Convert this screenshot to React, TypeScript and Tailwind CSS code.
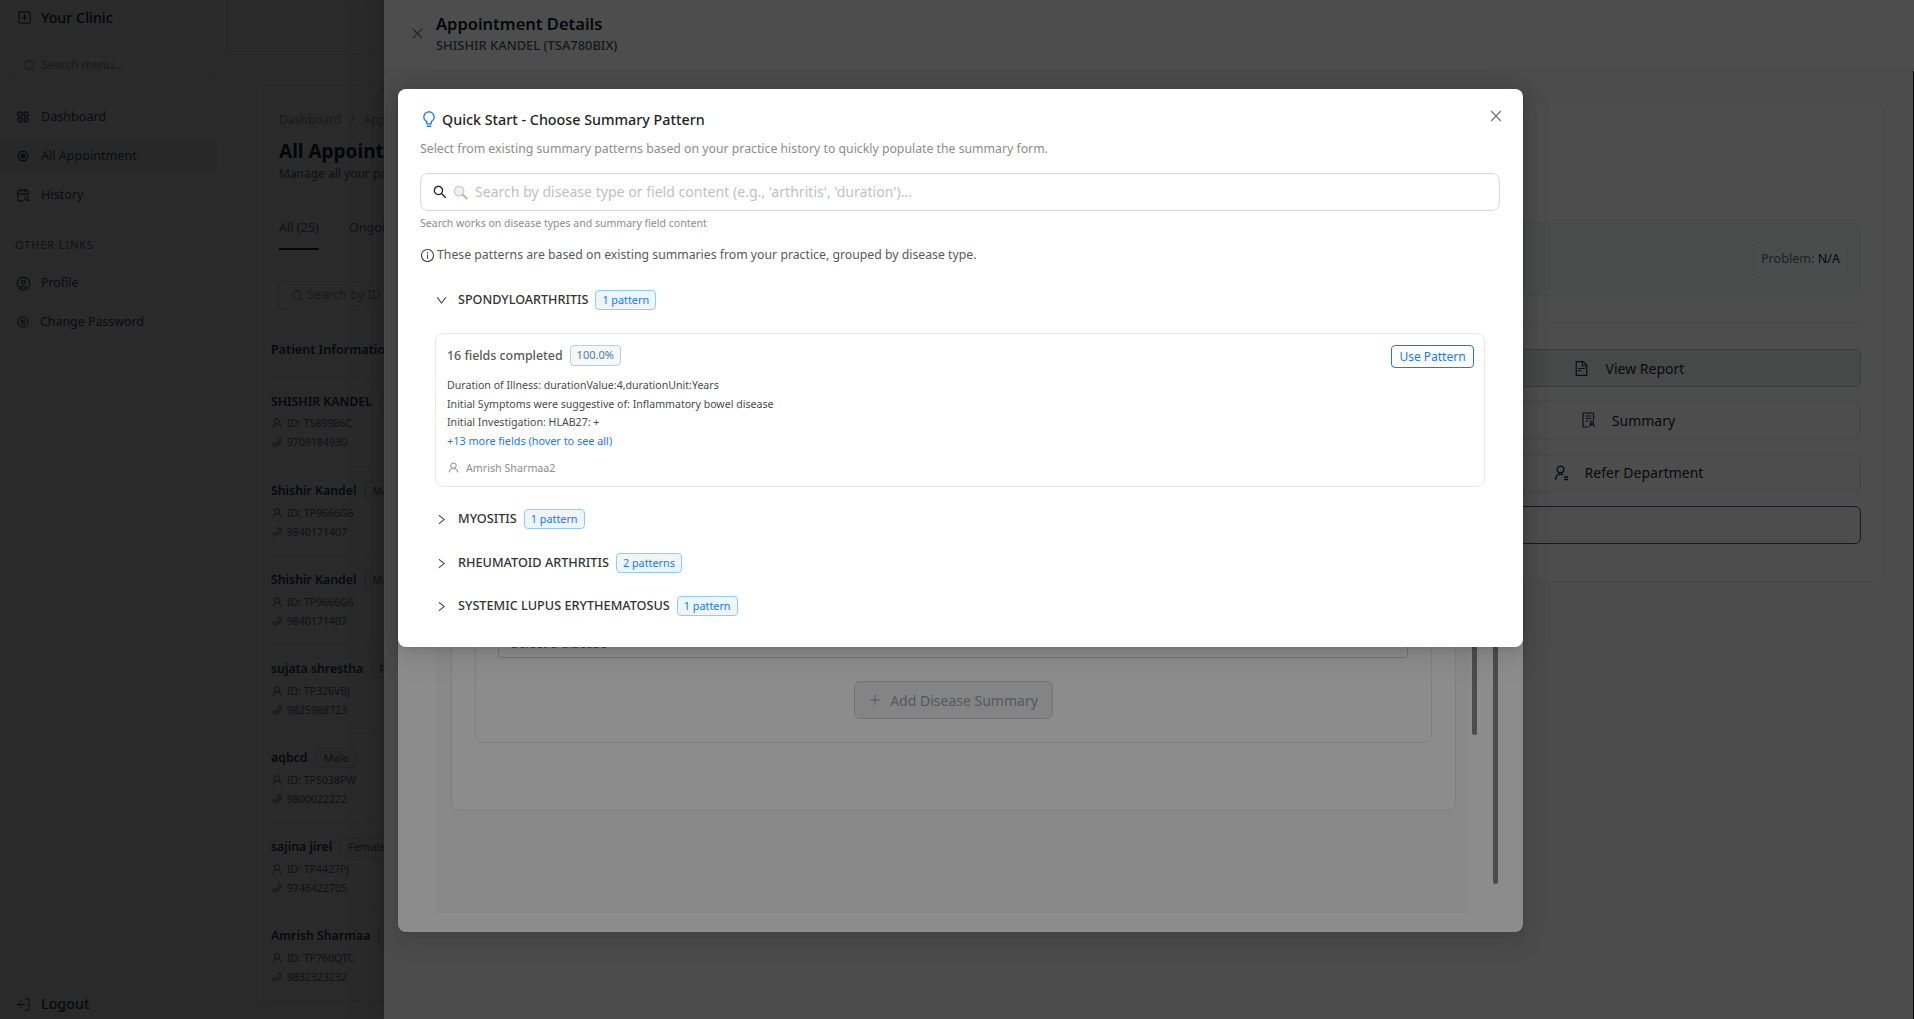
import { useState } from "react";
import { CalendarSearch, CircleUser, LogOut, Search, SquarePlus } from "lucide-react";
import {
  AiOutlineBulb,
  AiOutlineClose,
  AiOutlineDown,
  AiOutlineFileText,
  AiOutlineInfoCircle,
  AiOutlinePhone,
  AiOutlinePlus,
  AiOutlineRight,
  AiOutlineSearch,
  AiOutlineUser,
} from "react-icons/ai";

const patients = [
  { name: "SHISHIR KANDEL", gender: "Male", id: "TS89986C", phone: "9709184930" },
  { name: "Shishir Kandel", gender: "Male", id: "TP9666G6", phone: "9840171407" },
  { name: "Shishir Kandel", gender: "Male", id: "TP9666G6", phone: "9840171407" },
  { name: "sujata shrestha", gender: "Female", id: "TP326VBJ", phone: "9825988723" },
  { name: "aqbcd", gender: "Male", id: "TP5038PW", phone: "9800022222" },
  { name: "sajina jirel", gender: "Female", id: "TP4427PJ", phone: "9746422705" },
  { name: "Amrish Sharmaa", gender: "Male", id: "TP760QTC", phone: "9832323232" },
];

const groups = [
  { name: "MYOSITIS", count: "1 pattern", mt: "mt-[22px]" },
  { name: "RHEUMATOID ARTHRITIS", count: "2 patterns", mt: "mt-[24px]" },
  { name: "SYSTEMIC LUPUS ERYTHEMATOSUS", count: "1 pattern", mt: "mt-[23px]" },
];

function DashboardIcon() {
  return (
    <svg className="h-[14px] w-[14px]" viewBox="0 0 14 14" fill="none" stroke="currentColor" strokeWidth="1.4">
      <rect x="2" y="2" width="4" height="4" rx="1.2" />
      <rect x="8" y="2" width="4" height="4" rx="1.2" />
      <circle cx="4" cy="10" r="2" />
      <circle cx="10" cy="10" r="2" />
    </svg>
  );
}

function AppointmentIcon() {
  return (
    <svg className="h-[14px] w-[14px]" viewBox="0 0 14 14" fill="none" stroke="currentColor" strokeWidth="1.4">
      <circle cx="7" cy="7" r="4.8" />
      <circle cx="7" cy="7" r="2.8" fill="currentColor" stroke="none" />
    </svg>
  );
}

function PasswordIcon() {
  return (
    <svg className="h-[14px] w-[14px]" viewBox="0 0 14 14" fill="none" stroke="currentColor" strokeWidth="1.1">
      <circle cx="7" cy="7" r="5" />
      <path d="M9 5.4H6a.9.9 0 000 1.8h2a.9.9 0 010 1.8H5" />
    </svg>
  );
}

function SummaryIcon() {
  return (
    <svg className="h-[16px] w-[14px]" viewBox="0 0 14 16" fill="none" stroke="currentColor" strokeWidth="1.2">
      <path d="M6 15H2a1 1 0 01-1-1V2a1 1 0 011-1h8.5a1 1 0 011 1v6" />
      <path d="M3.5 4h6M3.5 6.5h6M3.5 9h3" />
      <circle cx="10" cy="10.6" r="1.6" />
      <path d="M7.5 15c.2-1.6 1.2-2.6 2.5-2.6s2.3 1 2.5 2.6" />
    </svg>
  );
}

function ReferIcon() {
  return (
    <svg className="h-[16px] w-[15px]" viewBox="0 0 15 16" fill="none" stroke="currentColor" strokeWidth="1.3">
      <circle cx="6.5" cy="4.5" r="3.3" />
      <path d="M1.5 15c.2-3.6 2.2-6 5-6 1 0 1.9.3 2.6.8" />
      <path d="M10 12h4M10 14.5h4" />
    </svg>
  );
}

function Sidebar() {
  const menu = [
    { label: "Dashboard", icon: <DashboardIcon /> },
    { label: "All Appointment", icon: <AppointmentIcon />, active: true },
    { label: "History", icon: <CalendarSearch className="h-[14px] w-[14px]" strokeWidth={2} /> },
  ];
  const links = [
    { label: "Profile", icon: <CircleUser className="h-[15px] w-[15px]" strokeWidth={2} /> },
    { label: "Change Password", icon: <PasswordIcon /> },
  ];
  return (
    <aside className="flex h-full w-[226px] shrink-0 flex-col bg-white text-[#4b5563]">
      <div className="flex h-[35px] items-center gap-[9px] pl-[17px] text-[#1f2937]">
        <SquarePlus className="h-[15px] w-[15px]" strokeWidth={1.6} />
        <span className="text-[14.3px] font-medium">Your Clinic</span>
      </div>
      <div className="mx-[11px] mt-[15px] flex h-[30px] w-[202px] items-center gap-[5px] rounded-md border border-[#e5e7eb] pl-[11px] text-[11.8px] text-[#9ca3af]">
        <Search className="h-[13px] w-[13px]" />
        Search menu...
      </div>
      <nav className="mt-[20px] flex flex-col gap-[5px]">
        {menu.map((item) => (
          <div
            key={item.label}
            className={`flex h-[34px] w-[217px] items-center gap-[11px] pl-[16px] text-[12.6px] ${item.active ? "bg-[#f4f5f6]" : ""}`}
          >
            {item.icon}
            <span>{item.label}</span>
          </div>
        ))}
      </nav>
      <p className="mt-[25px] pl-[15px] text-[11px] leading-4 tracking-[0.08em] text-[#6b7280]">OTHER LINKS</p>
      <nav className="mt-[13px] flex flex-col gap-[5px]">
        {links.map((item) => (
          <div key={item.label} className="flex h-[34px] w-[217px] items-center gap-[10px] pl-[16px] text-[12.4px]">
            {item.icon}
            <span>{item.label}</span>
          </div>
        ))}
      </nav>
      <div className="mb-[1px] mt-auto flex h-[28px] items-center gap-[10px] pl-[16px] text-[14.3px] font-medium text-[#374151]">
        <LogOut className="h-[15px] w-[15px] -scale-x-100" strokeWidth={1.5} />
        Logout
      </div>
    </aside>
  );
}

function PatientList() {
  return (
    <div className="-ml-[8px] mt-[31px] w-[500px]">
      <div className="border-b border-[#eef0f2] pb-[18px] text-[12.6px] font-semibold leading-[18px] text-[#374151]">
        Patient Information
      </div>
      {patients.map((p, i) => (
        <div key={i} className="h-[89px] border-b border-[#f0f1f3] pt-[14.4px]">
          <div className="flex h-[20px] items-center gap-[8px]">
            <span className="text-[12.3px] font-semibold text-[#374151]">{p.name}</span>
            <span className="flex h-[20px] items-center rounded border border-[#dfe2e6] bg-[#fafafa] px-[7px] text-[11px] text-[#6b7280]">
              {p.gender}
            </span>
          </div>
          <div className={`${i === 0 ? "mt-[2px]" : "mt-[3px]"} flex h-[18px] items-center gap-[4px] text-[10.5px] text-[#6b7280]`}>
            <AiOutlineUser className="h-[12px] w-[12px]" />
            ID: {p.id}
          </div>
          <div className="mt-[1px] flex h-[18px] items-center gap-[4px] text-[10.5px] text-[#6b7280]">
            <AiOutlinePhone className="h-[12px] w-[12px]" />
            {p.phone}
          </div>
        </div>
      ))}
    </div>
  );
}

function MainPage() {
  return (
    <main className="min-w-0 flex-1 overflow-hidden bg-white">
      <div className="h-[55px] border-b border-l border-[#e5e7eb]" />
      <div className="ml-[30px] mt-[30px] w-[800px] border border-[#f3f4f6] pl-[22px] pt-[25px]">
        <p className="text-[12px] leading-[18px] text-[#9ca3af]">
          Dashboard<span className="mx-[9px]">/</span>Appointments
        </p>
        <h1 className="mt-[8px] text-[19px] font-bold leading-[28px] text-[#1f2937]">All Appointments</h1>
        <p className="text-[12px] leading-[18px] text-[#6b7280]">Manage all your patient appointments</p>
        <div className="mt-[35px] flex gap-[30px] text-[12.6px] text-[#6b7280]">
          <span className="border-b-2 border-[#1f2937] pb-[10px] leading-[20px]">All (25)</span>
          <span className="leading-[20px]">Ongoing</span>
        </div>
        <div className="mt-[31px] flex h-[29px] w-[300px] items-center gap-[3px] rounded border border-[#e5e7eb] pl-[11px] text-[12.6px] text-[#9ca3af]">
          <Search className="h-[13px] w-[13px]" />
          Search by ID
        </div>
        <PatientList />
      </div>
    </main>
  );
}

function ActionButton({ icon, label, shaded }: { icon: React.ReactNode; label: string; shaded?: boolean }) {
  return (
    <div
      className={`flex h-[38px] items-center justify-center gap-[16px] rounded-md border text-[14px] text-[#1f2937] ${shaded ? "border-[#c9cbcd] bg-[#eceeee]" : "border-[#e5e7eb]"}`}
    >
      {icon}
      {label}
    </div>
  );
}

function AppointmentDrawer() {
  return (
    <div className="absolute inset-y-0 left-[384px] right-0 flex flex-col bg-white shadow-[-6px_0_16px_0_rgba(0,0,0,0.08),-3px_0_6px_-4px_rgba(0,0,0,0.12),-9px_0_28px_8px_rgba(0,0,0,0.05)]">
      <div className="flex h-[71px] shrink-0 items-center border-b border-[#f0f0f0] pl-[26px]">
        <AiOutlineClose className="-mt-[4px] h-[15px] w-[15px] text-[#737373]" />
        <div className="-mt-[3px] ml-[11px]">
          <h2 className="text-[16.5px] font-semibold leading-[24px] text-[#111827]">Appointment Details</h2>
          <p className="text-[12.9px] font-medium leading-[19px] text-[#4b5563]">SHISHIR KANDEL (TSA780BIX)</p>
        </div>
      </div>
      <div className="relative flex-1 bg-[#fbfcfd] pr-[31px] pt-[30px]">
        <div className="ml-[32px] h-[481px] rounded-lg border border-[#f0f0f0] bg-white pl-[979px] pr-[21px] pt-[121px]">
          <div className="flex h-[73px] items-center justify-end rounded-lg border border-[#eceff1] bg-[#fafbfc] pr-[12px]">
            <span className="flex h-[36px] items-center rounded-md border border-[#f0f0f0] px-[7px] text-[12.6px] text-[#6b7280]">
              Problem:&nbsp;<span className="text-[#111827]">N/A</span>
            </span>
          </div>
          <div className="mt-[27px] border-t border-[#f0f0f0] pt-[25px]" />
          <div className="flex flex-col gap-[14.4px]">
            <ActionButton shaded icon={<AiOutlineFileText className="h-[17px] w-[17px]" />} label="View Report" />
            <ActionButton icon={<SummaryIcon />} label="Summary" />
            <ActionButton icon={<ReferIcon />} label="Refer Department" />
            <div className="h-[38px] rounded-md border border-[#4b5563]" />
          </div>
        </div>
        <div className="absolute bottom-0 right-0 top-0 w-px bg-[#111]" />
      </div>
    </div>
  );
}

function SummaryModal() {
  return (
    <div className="absolute left-[398px] top-[89px] flex h-[843px] w-[1125px] flex-col justify-end rounded-lg bg-white pb-[19px] pl-[38px] pr-[52px] shadow-[0_6px_16px_0_rgba(0,0,0,0.08),0_3px_6px_-4px_rgba(0,0,0,0.12),0_9px_28px_8px_rgba(0,0,0,0.05)]">
      <div className="bg-[#f9f9f9] px-[15px] pb-[102px]">
        <div className="rounded-lg border border-[#e5e7eb] bg-white px-[23px] pb-[67px]">
          <div className="rounded-lg border border-[#e5e7eb] pb-[23px] pl-[22px] pr-[23px]">
            <div className="flex h-[36px] items-center rounded border border-[#d1d5db] pl-[12px] pt-[8px] text-[13px] text-[#6b7280]">
              Select a disease
            </div>
            <div className="mt-[23px] flex justify-center">
              <div className="flex h-[38px] w-[199px] items-center justify-center gap-[8px] rounded-md border border-[#d1d5db] bg-[#f0f0f0] text-[14px] text-[#9ca3af]">
                <AiOutlinePlus className="h-[14px] w-[14px]" />
                Add Disease Summary
              </div>
            </div>
          </div>
        </div>
      </div>
      <div className="absolute right-[46px] top-[40px] h-[606px] w-[5px] rounded-full bg-[#8a8a8a]" />
      <div className="absolute right-[25px] top-[40px] h-[755px] w-[5px] rounded-full bg-[#8a8a8a]" />
    </div>
  );
}

function PatternTag({ text }: { text: string }) {
  return (
    <span className="flex h-[20px] items-center rounded border border-[#91caff] bg-[#eef6fc] px-[6px] text-[10.8px] text-[#1677ff]">
      {text}
    </span>
  );
}

function QuickStartModal() {
  const [query, setQuery] = useState("");
  return (
    <div className="absolute left-[398px] top-[89px] h-[558px] w-[1125px] rounded-lg bg-white pl-[22px] pr-[23px] pt-[19px] shadow-[0_6px_16px_0_rgba(0,0,0,0.08),0_3px_6px_-4px_rgba(0,0,0,0.12),0_9px_28px_8px_rgba(0,0,0,0.05)]">
      <AiOutlineClose className="absolute right-[19px] top-[19px] h-[16px] w-[16px] text-[#737373]" />
      <div className="flex h-[22px] items-center gap-[4px]">
        <AiOutlineBulb className="h-[18px] w-[18px] text-[#1677ff]" />
        <h3 className="mt-[2px] text-[14.3px] font-medium text-[#1f1f1f]">Quick Start - Choose Summary Pattern</h3>
      </div>
      <p className="mt-[10px] text-[12.28px] leading-[18px] text-[#8c8c8c]">
        Select from existing summary patterns based on your practice history to quickly populate the summary form.
      </p>
      <div className="mt-[15px] flex h-[38px] items-center rounded-lg border border-[#d9d9d9] pl-[11px]">
        <AiOutlineSearch className="h-[16px] w-[16px] text-[#1f1f1f]" />
        <svg className="ml-[5px] h-[15px] w-[15px]" viewBox="0 0 16 16">
          <circle cx="6.5" cy="6.5" r="5" fill="#eaf3f8" stroke="#c6cfd4" strokeWidth="1.5" />
          <path d="M10.5 10.5l4 4" stroke="#c0b8a8" strokeWidth="2.2" strokeLinecap="round" />
        </svg>
        <input
          className="ml-[7px] min-w-0 flex-1 bg-transparent text-[14.08px] outline-none placeholder:text-[#bfbfbf]"
          placeholder="Search by disease type or field content (e.g., 'arthritis', 'duration')..."
          value={query}
          onChange={(e) => setQuery(e.target.value)}
        />
      </div>
      <p className="mt-[4px] text-[10.54px] leading-[16px] text-[#8c8c8c]">Search works on disease types and summary field content</p>
      <div className="mt-[15px] flex h-[18px] items-center gap-[2px] text-[12.28px] text-[#595959]">
        <AiOutlineInfoCircle className="h-[15px] w-[15px] text-[#404040]" />
        These patterns are based on existing summaries from your practice, grouped by disease type.
      </div>

      <div className="mt-[26px] flex h-[20px] items-center gap-[10px] pl-[15px]">
        <AiOutlineDown className="h-[13px] w-[13px] text-[#404040]" />
        <div className="flex items-center gap-[7px]">
          <span className="text-[12.6px] font-medium text-[#333333]">SPONDYLOARTHRITIS</span>
          <PatternTag text="1 pattern" />
        </div>
      </div>
      <div className="ml-[15px] mr-[15px] mt-[23px] flex h-[154px] justify-between rounded-lg border border-[#e8e8e8] pl-[11px] pr-[10px] pt-[11px]">
        <div>
          <div className="flex h-[21px] items-center gap-[7px]">
            <span className="mt-[1px] text-[12.4px] font-medium text-[#595959]">16 fields completed</span>
            <span className="flex h-[21px] items-center rounded border border-[#c5ccd3] bg-[#f5f8fb] px-[6px] text-[11px] text-[#4f7a9c]">
              100.0%
            </span>
          </div>
          <div className="mt-[10px] text-[10.6px] leading-[18.7px] text-[#4a4a4a]">
            <p>Duration of Illness: durationValue:4,durationUnit:Years</p>
            <p>Initial Symptoms were suggestive of: Inflammatory bowel disease</p>
            <p>Initial Investigation: HLAB27: +</p>
            <p className="text-[10.85px] text-[#1677ff]">+13 more fields (hover to see all)</p>
          </div>
          <div className="mt-[8px] flex h-[18px] items-center gap-[6px] text-[10.7px] text-[#8c8c8c]">
            <AiOutlineUser className="h-[13px] w-[13px]" />
            Amrish Sharmaa2
          </div>
        </div>
        <button className="flex h-[23px] w-[83px] items-center justify-center rounded border border-[#1677ff] text-[12px] text-[#1677ff]" type="button">
          Use Pattern
        </button>
      </div>

      {groups.map((g) => (
        <div key={g.name} className={`${g.mt} flex h-[20px] items-center gap-[10px] pl-[15px]`}>
          <AiOutlineRight className="h-[13px] w-[13px] text-[#404040]" />
          <div className="flex items-center gap-[7px]">
            <span className="text-[12.7px] font-medium text-[#333333]">{g.name}</span>
            <PatternTag text={g.count} />
          </div>
        </div>
      ))}
    </div>
  );
}

export default function App() {
  return (
    <div className="relative h-screen w-full overflow-hidden bg-white [font-family:'Noto_Sans',sans-serif]">
      <div className="flex h-full">
        <Sidebar />
        <MainPage />
      </div>
      <div className="absolute inset-0 bg-black/45" />
      <AppointmentDrawer />
      <div className="absolute inset-0 bg-black/45" />
      <SummaryModal />
      <div className="absolute inset-0 bg-black/45" />
      <QuickStartModal />
    </div>
  );
}
